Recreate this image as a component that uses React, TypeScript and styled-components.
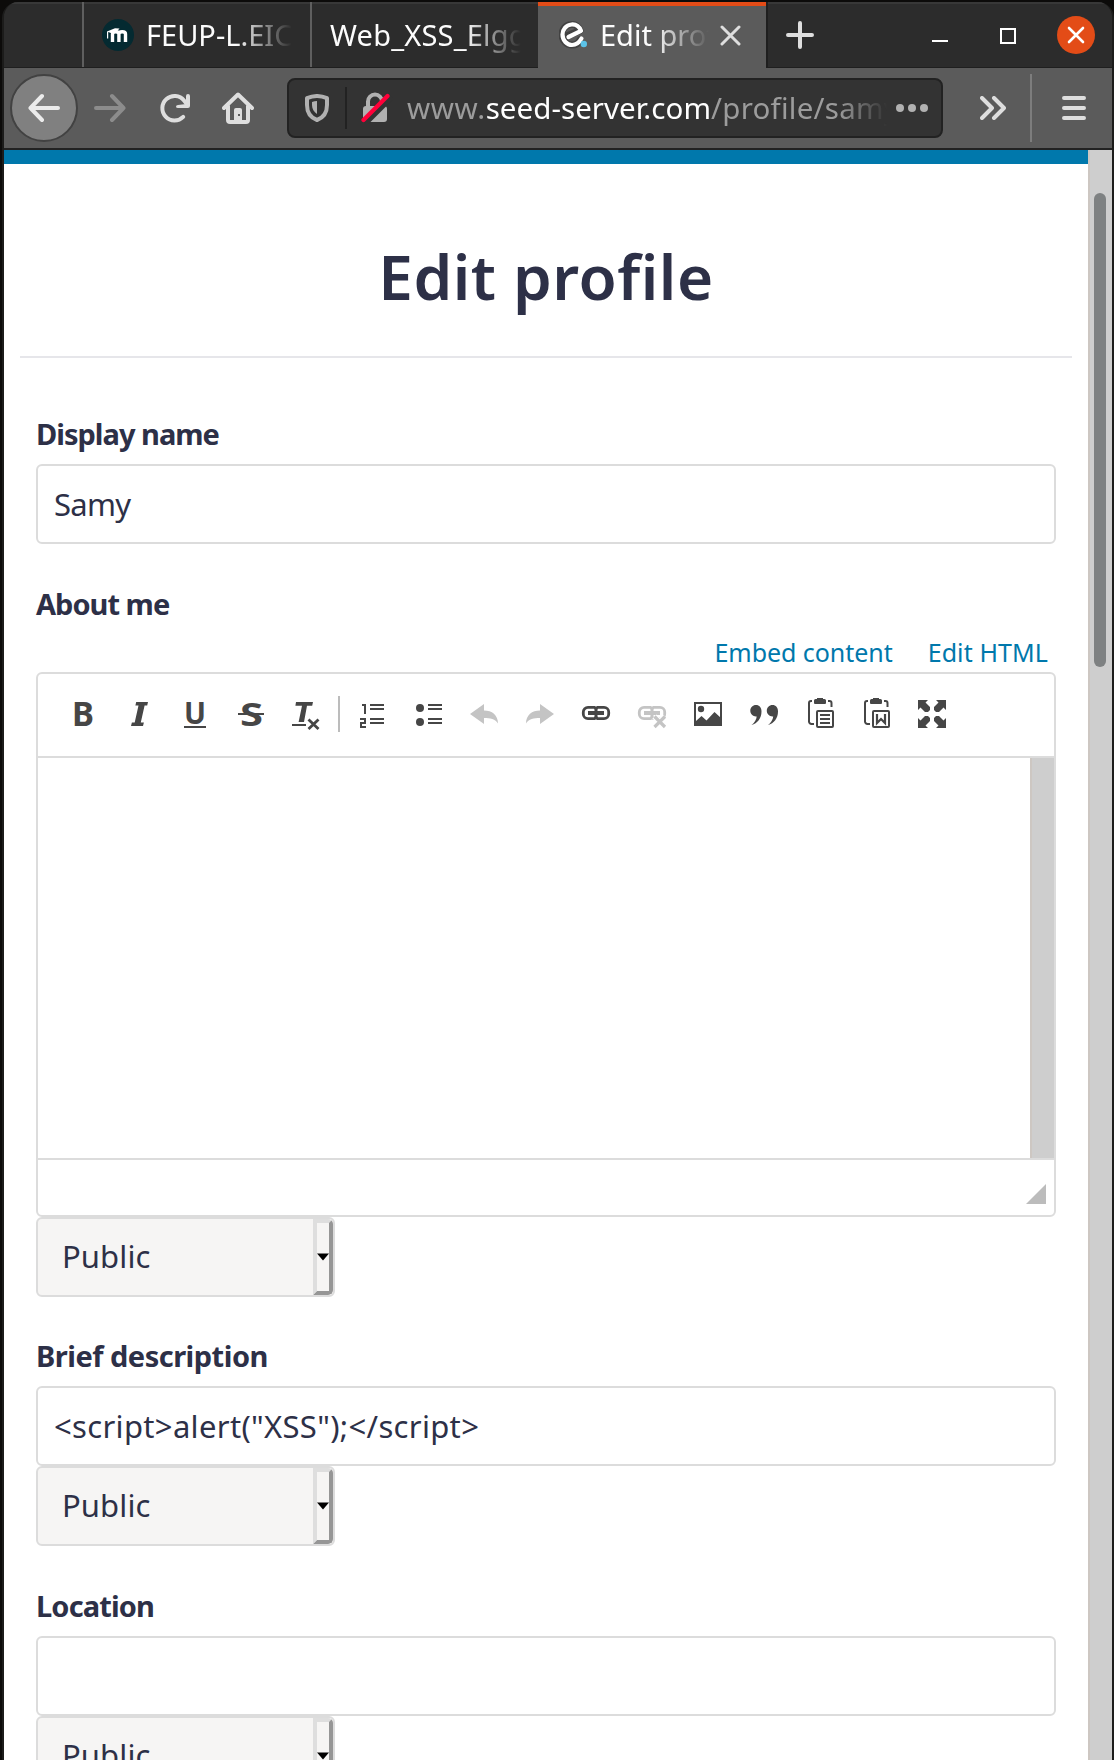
import React from "react";
import styled, { createGlobalStyle } from "styled-components";

const GlobalStyle = createGlobalStyle`
  * { box-sizing: border-box; }
  body {
    margin: 0;
    background: #0c0b0a;
    font-family: "Noto Sans", "Open Sans", sans-serif;
    overflow: hidden;
  }
  svg { display: block; flex: none; }
`;

/* ---------- Window frame ---------- */

const Desktop = styled.div`
  width: 1114px;
  height: 1760px;
  padding: 2px 0 0 2px;
  overflow: hidden;
  background: #0c0b0a;
`;

const Window = styled.div`
  display: flex;
  flex-direction: column;
  height: 1758px;
  border: solid #1c1c1b;
  border-width: 0 2px;
  border-radius: 16px 16px 0 0;
  overflow: hidden;
  background: #2c2c2c;
`;

/* ---------- Tab strip ---------- */

const TabStrip = styled.div`
  display: flex;
  flex: none;
  height: 66px;
  background: #2c2c2c;
  border-bottom: 1px solid #1f1f1f;
  box-shadow: inset 0 2px 0 #383838;
`;

const TabStub = styled.div`
  width: 78px;
`;

const Tab = styled.div<{ $active?: boolean; $width: number; $left: number }>`
  display: flex;
  align-items: center;
  width: ${(p) => p.$width}px;
  height: ${(p) => (p.$active ? 66 : 65)}px;
  padding-left: ${(p) => p.$left}px;
  background: ${(p) => (p.$active ? "#5b5b5b" : "transparent")};
  border-left: ${(p) => (p.$active ? "0" : "2px solid #5f5f5f")};
  ${(p) => p.$active && "border-top: 4px solid #e34c17; padding-bottom: 4px;"}
`;

const TabTitle = styled.span<{ $width: number; $gap: number; $fade: number; $spacing?: number }>`
  width: ${(p) => p.$width}px;
  margin-left: ${(p) => p.$gap}px;
  overflow: hidden;
  white-space: nowrap;
  color: #fcfcfc;
  font-size: 29px;
  line-height: 44px;
  letter-spacing: ${(p) => p.$spacing ?? 0}px;
  mask-image: linear-gradient(to left, transparent, #000 ${(p) => p.$fade}px);
`;

const TabClose = styled.div`
  margin-left: 11px;
`;

const StripEnd = styled.div`
  display: flex;
  flex: 1;
  align-items: center;
  height: 65px;
  padding-left: 18px;
  border-left: 2px solid #1f1f1f;
`;

const WindowButtons = styled.div`
  display: flex;
  align-items: center;
  margin-left: 118px;
`;

const MinimizeMark = styled.div`
  width: 16px;
  height: 2px;
  margin-top: 12px;
  background: #fff;
`;

const MaximizeMark = styled.div`
  width: 16px;
  height: 16px;
  margin: 2px 41px 0 52px;
  border: 2px solid #fff;
`;

const CloseButton = styled.div`
  display: flex;
  align-items: center;
  justify-content: center;
  width: 38px;
  height: 38px;
  margin-top: 1px;
  border-radius: 50%;
  background: #e34c17;
`;

/* ---------- Navigation bar ---------- */

const NavBar = styled.div`
  display: flex;
  flex: none;
  align-items: center;
  height: 82px;
  padding-left: 6px;
  background: #5b5b5b;
  border-bottom: 2px solid #222;
`;

const BackButton = styled.div`
  display: flex;
  align-items: center;
  justify-content: center;
  width: 68px;
  height: 68px;
  border: 2px solid #424242;
  border-radius: 50%;
  background: #808080;
`;

const NavIcons = styled.div`
  display: flex;
  align-items: center;
  gap: 32px;
  width: 209px;
  padding-left: 16px;
`;

const UrlBar = styled.div`
  display: flex;
  align-items: center;
  width: 656px;
  height: 60px;
  padding-left: 16px;
  border: 2px solid #222;
  border-radius: 8px;
  background: #333;
`;

const UrlDivider = styled.div`
  width: 2px;
  height: 42px;
  margin: 0 14px 0 16px;
  background: #222;
`;

const UrlText = styled.div`
  width: 480px;
  margin-left: 14px;
  overflow: hidden;
  white-space: nowrap;
  color: #9c9c9c;
  font-size: 29.5px;
  line-height: 46px;
  mask-image: linear-gradient(to left, transparent, #000 48px);
`;

const UrlPart = styled.span<{ $host?: boolean; $spacing: number }>`
  color: ${(p) => (p.$host ? "#fff" : "inherit")};
  letter-spacing: ${(p) => p.$spacing}px;
`;

const PageActions = styled.div`
  display: flex;
  gap: 4px;
  margin-left: 9px;
`;

const ActionDot = styled.div`
  width: 8px;
  height: 8px;
  border-radius: 50%;
  background: #b1b1b1;
`;

const NavEnd = styled.div`
  display: flex;
  align-items: center;
  padding-left: 37px;
`;

const NavDivider = styled.div`
  width: 2px;
  height: 68px;
  margin: 0 30px 0 24px;
  background: #7d7d7d;
`;

/* ---------- Page ---------- */

const Viewport = styled.div`
  display: flex;
  flex: 1;
  min-height: 0;
  background: #fff;
`;

const Page = styled.main`
  width: 1084px;
  overflow: hidden;
  border-top: 14px solid #0078ac;
  color: #2d3047;
`;

const ScrollTrack = styled.div`
  flex: 1;
  padding: 43px 0 0 4px;
  border-left: 2px solid #cdc7c2;
  background: #cecece;
`;

const ScrollThumb = styled.div`
  width: 12px;
  height: 474px;
  border-radius: 6px;
  background: #7e8182;
`;

const TitleBlock = styled.header`
  height: 194px;
  margin: 0 16px;
  padding-top: 68px;
  border-bottom: 2px solid #e6e6ea;
`;

const Title = styled.h1`
  margin: 0;
  font-size: 62px;
  font-weight: 600;
  line-height: 88px;
  letter-spacing: 0.5px;
  text-align: center;
`;

const Form = styled.form`
  padding: 56px 32px 0;
`;

const Field = styled.div<{ $gap?: number }>`
  margin-bottom: ${(p) => p.$gap ?? 40}px;
`;

const LabelRow = styled.div`
  height: 50px;
`;

const Label = styled.label<{ $spacing?: number }>`
  display: block;
  font-size: 29px;
  font-weight: 700;
  line-height: 40px;
  letter-spacing: ${(p) => p.$spacing ?? -0.98}px;
`;

const TextInput = styled.input<{ $spacing?: number }>`
  display: block;
  width: 1020px;
  height: 80px;
  padding: 0 16px 1px;
  border: 2px solid #dcdcdc;
  border-radius: 6px;
  outline: 0;
  background: #fff;
  color: #2d3047;
  font: 31px "Noto Sans", "Open Sans", sans-serif;
  letter-spacing: ${(p) => p.$spacing ?? 0}px;
`;

const SelectBox = styled.div`
  display: flex;
  justify-content: space-between;
  width: 299px;
  height: 80px;
  padding-left: 24px;
  border: 2px solid #dcdcdc;
  border-radius: 6px;
  overflow: hidden;
  background: #f6f5f4;
  font-size: 31px;
  line-height: 74px;
  letter-spacing: 0.1px;
`;

const SelectArrow = styled.div`
  display: flex;
  align-items: center;
  justify-content: center;
  width: 20px;
  height: 76px;
  border: 4px solid;
  border-color: #dedede #969696 #969696 #dedede;
  border-radius: 0 5px 5px 0;
`;

const EditorLinks = styled.div`
  display: flex;
  justify-content: flex-end;
  gap: 35px;
  height: 48px;
  padding: 10px 8px 0 0;
  color: #0078ac;
  font-size: 25px;
  line-height: 37px;
`;

const EditorLink = styled.a<{ $spacing?: number }>`
  letter-spacing: ${(p) => p.$spacing ?? 0}px;
`;

const Editor = styled.div`
  width: 1020px;
  height: 545px;
  border: 2px solid #dcdcdc;
  border-radius: 6px;
  overflow: hidden;
`;

const EditorToolbar = styled.div`
  display: flex;
  align-items: center;
  height: 84px;
  padding: 0 0 2px 17px;
  border-bottom: 2px solid #dcdcdc;
`;

const ToolButton = styled.div`
  display: flex;
  justify-content: center;
  width: 56px;
`;

const ToolDivider = styled.div`
  width: 2px;
  height: 36px;
  margin: 0 4px 0 3px;
  background: #bcbcbc;
`;

const EditorBody = styled.div`
  display: flex;
  justify-content: flex-end;
  height: 402px;
  border-bottom: 2px solid #dcdcdc;
`;

const EditorScroll = styled.div`
  width: 24px;
  border-left: 2px solid #cdc7c2;
  background: #cecece;
`;

const EditorFooter = styled.div`
  display: flex;
  justify-content: flex-end;
  padding: 24px 8px 0 0;
`;

/* ---------- Icons ---------- */

const DARK = "#464646";
const PALE = "#c4c4c4";
const NAV = "#dedede";

const ToolIcon = ({ children }: { children: React.ReactNode }) => (
  <svg width="32" height="32" viewBox="0 0 32 32" fill={DARK} overflow="visible">
    {children}
  </svg>
);

const letterFont = '"Noto Sans", sans-serif';

const BoldIcon = () => (
  <ToolIcon>
    <text x="16" y="28" fontFamily={letterFont} fontWeight="700" fontSize="33.500" textAnchor="middle" textLength="22" lengthAdjust="spacingAndGlyphs">B</text>
  </ToolIcon>
);
const ItalicIcon = () => (
  <ToolIcon>
    <path d="M13.200 4H25l-.8 3.600h-2.600L17.800 24.400h3.100L20 28H8l.9-3.600h2.800L15.500 7.600h-3.100z" />
  </ToolIcon>
);
const UnderlineIcon = () => (
  <ToolIcon>
    <text x="16" y="25.500" fontFamily={letterFont} fontWeight="700" fontSize="30" textAnchor="middle" textLength="22" lengthAdjust="spacingAndGlyphs">U</text>
    <path d="M5 28h22v2H5z" />
  </ToolIcon>
);
const StrikeIcon = () => (
  <ToolIcon>
    <text x="16.500" y="27.500" fontFamily={letterFont} fontWeight="700" fontSize="33" textAnchor="middle" textLength="23" lengthAdjust="spacingAndGlyphs">S</text>
    <path d="M3 15h26v2H3z" />
  </ToolIcon>
);
const ClearIcon = () => (
  <ToolIcon>
    <path d="M5 4h17l-.8 3.800H16L13 24H7.600l3.400-16.200H4.400z" />
    <path d="M1 26h14v2H1z" />
    <path d="M17.500 21.500l10 9.500M27.500 21.500l-10 9.500" stroke={DARK} strokeWidth="2.800" />
  </ToolIcon>
);
const NumberedIcon = () => (
  <ToolIcon>
    <path d="M14 6h14v2H14zM14 10h14v2H14zM14 20h14v2H14zM14 24h14v2H14z" />
    <path d="M6 7h3v9M4 21h5v4H5v4h5" fill="none" stroke={DARK} strokeWidth="2" />
  </ToolIcon>
);
const BulletIcon = () => (
  <ToolIcon>
    <path d="M16 6h14v2H16zM16 10h14v2H16zM16 20h14v2H16zM16 24h14v2H16z" />
    <circle cx="8" cy="10" r="4" />
    <circle cx="8" cy="24" r="4" />
  </ToolIcon>
);
const UndoIcon = ({ flip }: { flip?: boolean }) => (
  <ToolIcon>
    <path
      fill={PALE}
      transform={flip ? "matrix(-1 0 0 1 32 0)" : undefined}
      d="M2 16L16 6v6.500C24 12.500 30 17 30 25.500C27.500 21 22 20 16 20v6z"
    />
  </ToolIcon>
);
const LinkShape = ({ color }: { color: string }) => (
  <>
    <path
      d="M16 10.800L14.500 9.300H8a4.700 4.700 0 0 0-4.700 4.700v2A4.700 4.700 0 0 0 8 20.700h6.500L16 19.200l1.500 1.500H24a4.700 4.700 0 0 0 4.700-4.700v-2A4.700 4.700 0 0 0 24 9.300h-6.500z"
      fill="none"
      stroke={color}
      strokeWidth="2.800"
    />
    <path d="M8 13.100h16v3.800H8z" fill={color} />
    <path d="M14.500 9.500h3v11h-3z" fill={color} />
  </>
);
const LinkIcon = () => (
  <ToolIcon>
    <LinkShape color={DARK} />
  </ToolIcon>
);
const UnlinkIcon = () => (
  <ToolIcon>
    <LinkShape color={PALE} />
    <path d="M18.500 18.500l10.500 10.500M29 18.500L18.500 29" stroke="#fff" strokeWidth="6" />
    <path d="M18.500 18.500l10.500 10.500M29 18.500L18.500 29" stroke={PALE} strokeWidth="3.200" />
  </ToolIcon>
);
const ImageIcon = () => (
  <ToolIcon>
    <path d="M3 5h26v22H3z" fill="none" stroke={DARK} strokeWidth="2" />
    <circle cx="9" cy="11" r="3.200" />
    <path d="M4 26v-3l5.500-5 5 4.500L22.500 14l6.500 6v6z" />
  </ToolIcon>
);
const QuoteIcon = () => (
  <ToolIcon>
    <path d="M8 7c3.300 0 5.500 2.500 5.500 6.500C13.500 20 9.500 25.500 3.500 27c3-2.500 5-5.500 5.200-8.600C5.500 18.800 2.300 16.500 2.300 12.800 2.300 9.500 4.700 7 8 7z" />
    <path d="M24.500 7c3.300 0 5.500 2.500 5.500 6.500 0 6.500-4 12-10 13.500 3-2.500 5-5.500 5.200-8.600-3.200.4-6.400-1.900-6.400-5.600C18.800 9.500 21.200 7 24.500 7z" />
  </ToolIcon>
);
const PasteIcon = ({ word }: { word?: boolean }) => (
  <ToolIcon>
    <path d="M8 3H7a2 2 0 0 0-2 2v18.500a2.500 2.500 0 0 0 2.500 2.500H10M24 3h1.500a2 2 0 0 1 2 2v4" fill="none" stroke={DARK} strokeWidth="2" />
    <path d="M10 2.500q0-1.500 1.500-1.500H13V0h6v1h1.500q1.500 0 1.500 1.500V5q0 1-1 1H11q-1 0-1-1z" />
    <rect x="13" y="13" width="16" height="16" rx="1" fill="#fff" stroke={DARK} strokeWidth="2" />
    {word ? (
      <path d="M17 16v9l4-4 4 4v-9" fill="none" stroke={DARK} strokeWidth="2.200" />
    ) : (
      <path d="M16 17h10M16 21h10M16 25h10" stroke={DARK} strokeWidth="2" />
    )}
  </ToolIcon>
);
const ExpandIcon = () => (
  <ToolIcon>
    {[0, 90, 180, 270].map((a) => (
      <path key={a} transform={`rotate(${a} 16 16)`} d="M2 2h10L9.500 4.500l4.500 4.500v3l-2 2H9L4.500 9.500 2 12z" />
    ))}
  </ToolIcon>
);

const tools = [
  <BoldIcon />, <ItalicIcon />, <UnderlineIcon />, <StrikeIcon />, <ClearIcon />, null,
  <NumberedIcon />, <BulletIcon />, <UndoIcon />, <UndoIcon flip />, <LinkIcon />, <UnlinkIcon />,
  <ImageIcon />, <QuoteIcon />, <PasteIcon />, <PasteIcon word />, <ExpandIcon />,
];

const MoodleIcon = () => (
  <svg width="32" height="32" viewBox="0 0 32 32">
    <circle cx="16" cy="16" r="16" fill="#042a31" />
    <path d="M10.500 23v-8q0-2.200 3.200-2.200t3.200 2.200v8M16.900 23v-8q0-2.200 3.300-2.200t3.300 2.200v8" fill="none" stroke="#fff" strokeWidth="3.400" />
    <path d="M5 12.500L13 9.200l4.500.3-2.800 3.300-4 2z" fill="#fff" />
    <path d="M5.600 12.500v7" stroke="#fff" strokeWidth="1.200" />
  </svg>
);
const ElggIcon = () => (
  <svg width="28" height="28" viewBox="0 0 28 28">
    <path d="M6.500 15.500L21 9.500C19.500 5 15.500 3 12 3.500 6.500 4 3 8.500 3 13.500 3 19.500 7.500 24 13 24c3.500 0 6.500-1.500 8-5" fill="none" stroke="#424242" strokeWidth="7" strokeLinejoin="round" strokeLinecap="round" />
    <path d="M9.500 16L22 9.800C20 5 16 3.200 12.500 3.500 7 4 3.500 8.500 3.500 13.500 3.500 19.500 8 24 13 24c4 0 7-2 9.500-6.500" fill="none" stroke="#fff" strokeWidth="4.200" strokeLinejoin="round" strokeLinecap="round" />
    <circle cx="24.800" cy="23" r="3.200" fill="#5cc3e8" />
  </svg>
);
const CrossIcon = ({ size, color, width }: { size: number; color: string; width: number }) => (
  <svg width={size} height={size} viewBox={`0 0 ${size} ${size}`}>
    <path d={`M2 2L${size - 2} ${size - 2}M${size - 2} 2L2 ${size - 2}`} stroke={color} strokeWidth={width} strokeLinecap="round" />
  </svg>
);
const PlusIcon = () => (
  <svg width="28" height="28" viewBox="0 0 28 28">
    <path d="M14 2v24M2 14h24" stroke={NAV} strokeWidth="4" strokeLinecap="round" />
  </svg>
);
const ArrowIcon = ({ forward }: { forward?: boolean }) => (
  <svg width="32" height="32" viewBox="0 0 32 32">
    <path
      transform={forward ? "matrix(-1 0 0 1 32 0)" : undefined}
      d="M30 16H2.500M14 4L2.500 16 14 28"
      fill="none"
      stroke={forward ? "#8c8c8c" : "#ececec"}
      strokeWidth="4"
      strokeLinecap="round"
      strokeLinejoin="round"
    />
  </svg>
);
const ReloadIcon = () => (
  <svg width="32" height="32" viewBox="0 0 32 32">
    <path d="M25.200 24.800A12.200 12.200 0 1 1 26 8.500L28 11" fill="none" stroke={NAV} strokeWidth="4" strokeLinecap="round" />
    <path d="M28 4q0-2 2-2t2 2v10q0 2-2 2H20q-2 0-2-1.500t2-1.500l8-1z" fill={NAV} />
  </svg>
);
const HomeIcon = () => (
  <svg width="32" height="32" viewBox="0 0 32 32">
    <path d="M2 16L16 2.500 30 16M6 14v14q0 2 2 2h16q2 0 2-2V14" fill="none" stroke={NAV} strokeWidth="4" strokeLinecap="round" strokeLinejoin="round" />
    <path d="M12 30V18q0-2 2-2h4q2 0 2 2v12z" fill={NAV} />
    <path d="M16 22h2v2h-2z" fill="#5b5b5b" />
  </svg>
);
const ShieldIcon = () => (
  <svg width="24" height="28" viewBox="0 0 24 28">
    <path d="M2 4.200Q12-.2 22 4.200V11c0 8-4.500 13-10 15C6.500 24 2 19 2 11z" fill="none" stroke="#b1b1b1" strokeWidth="4" strokeLinejoin="round" />
    <path d="M12 7v13c-3-2-5-5-5-9V8q2.500-1 5-1z" fill="#b1b1b1" />
  </svg>
);
const InsecureIcon = () => (
  <svg width="32" height="32" viewBox="0 0 32 32">
    <path d="M7 14V9.500a7 7 0 0 1 14 0v4" fill="none" stroke="#b1b1b1" strokeWidth="4" />
    <rect x="2" y="14" width="24" height="16" rx="3" fill="#b1b1b1" />
    <path d="M4.500 31.500L31 5" stroke="#333" strokeWidth="5" />
    <path d="M2.500 28L26.500 4" stroke="#ff0039" strokeWidth="4.200" strokeLinecap="round" />
  </svg>
);
const OverflowIcon = () => (
  <svg width="26" height="24" viewBox="0 0 26 24">
    <path d="M2 2l10 10L2 22M14 2l10 10-10 10" fill="none" stroke={NAV} strokeWidth="4" strokeLinecap="round" strokeLinejoin="round" />
  </svg>
);
const MenuIcon = () => (
  <svg width="24" height="24" viewBox="0 0 24 24">
    <path d="M2 2h20M2 12h20M2 22h20" stroke={NAV} strokeWidth="4" strokeLinecap="round" />
  </svg>
);

/* ---------- Composed parts ---------- */

const AccessSelect = () => (
  <SelectBox>
    Public
    <SelectArrow>
      <svg width="12" height="8" viewBox="0 0 12 8">
        <path d="M0 .5h12L6 7.500z" fill="#000" />
      </svg>
    </SelectArrow>
  </SelectBox>
);

interface ProfileFieldProps {
  label: string;
  value: string;
  labelSpacing?: number;
  spacing?: number;
  access?: boolean;
}

const ProfileField = ({ label, value, labelSpacing, spacing, access }: ProfileFieldProps) => (
  <Field>
    <LabelRow>
      <Label $spacing={labelSpacing}>{label}</Label>
    </LabelRow>
    <TextInput defaultValue={value} $spacing={spacing} spellCheck={false} />
    {access && <AccessSelect />}
  </Field>
);

export default function App() {
  return (
    <Desktop>
      <GlobalStyle />
      <Window>
        <TabStrip>
          <TabStub />
          <Tab $width={228} $left={18}>
            <MoodleIcon />
            <TabTitle $width={146} $gap={12} $fade={56}>FEUP-L.EIC</TabTitle>
          </Tab>
          <Tab $width={228} $left={16}>
            <TabTitle $width={191} $gap={2} $fade={56} $spacing={0.2}>Web_XSS_Elgg</TabTitle>
          </Tab>
          <Tab $active $width={228} $left={21}>
            <ElggIcon />
            <TabTitle $width={109} $gap={13} $fade={56}>Edit profile</TabTitle>
            <TabClose>
              <CrossIcon size={21} color={NAV} width={3} />
            </TabClose>
          </Tab>
          <StripEnd>
            <PlusIcon />
            <WindowButtons>
              <MinimizeMark />
              <MaximizeMark />
              <CloseButton>
                <CrossIcon size={18} color="#fff" width={2.6} />
              </CloseButton>
            </WindowButtons>
          </StripEnd>
        </TabStrip>

        <NavBar>
          <BackButton>
            <ArrowIcon />
          </BackButton>
          <NavIcons>
            <ArrowIcon forward />
            <ReloadIcon />
            <HomeIcon />
          </NavIcons>
          <UrlBar>
            <ShieldIcon />
            <UrlDivider />
            <InsecureIcon />
            <UrlText>
              <UrlPart $spacing={0.6}>www.</UrlPart>
              <UrlPart $host $spacing={0.05}>seed-server.com</UrlPart>
              <UrlPart $spacing={0.25}>/profile/samy</UrlPart>
            </UrlText>
            <PageActions>
              <ActionDot />
              <ActionDot />
              <ActionDot />
            </PageActions>
          </UrlBar>
          <NavEnd>
            <OverflowIcon />
            <NavDivider />
            <MenuIcon />
          </NavEnd>
        </NavBar>

        <Viewport>
          <Page>
            <TitleBlock>
              <Title>Edit profile</Title>
            </TitleBlock>
            <Form>
              <ProfileField label="Display name" value="Samy" spacing={-0.7} />
              <Field $gap={39}>
                <Label>About me</Label>
                <EditorLinks>
                  <EditorLink $spacing={-0.05}>Embed content</EditorLink>
                  <EditorLink $spacing={0.1}>Edit HTML</EditorLink>
                </EditorLinks>
                <Editor>
                  <EditorToolbar>
                    {tools.map((icon, i) => (icon ? <ToolButton key={i}>{icon}</ToolButton> : <ToolDivider key={i} />))}
                  </EditorToolbar>
                  <EditorBody>
                    <EditorScroll />
                  </EditorBody>
                  <EditorFooter>
                    <svg width="20" height="20" viewBox="0 0 20 20">
                      <path d="M20 0v20H0z" fill="#bcbcbc" />
                    </svg>
                  </EditorFooter>
                </Editor>
                <AccessSelect />
              </Field>
              <ProfileField
                label="Brief description"
                labelSpacing={-0.5}
                value={'<script>alert("XSS");</script>'}
                spacing={0.33}
                access
              />
              <ProfileField label="Location" labelSpacing={-0.85} value="" access />
            </Form>
          </Page>
          <ScrollTrack>
            <ScrollThumb />
          </ScrollTrack>
        </Viewport>
      </Window>
    </Desktop>
  );
}
